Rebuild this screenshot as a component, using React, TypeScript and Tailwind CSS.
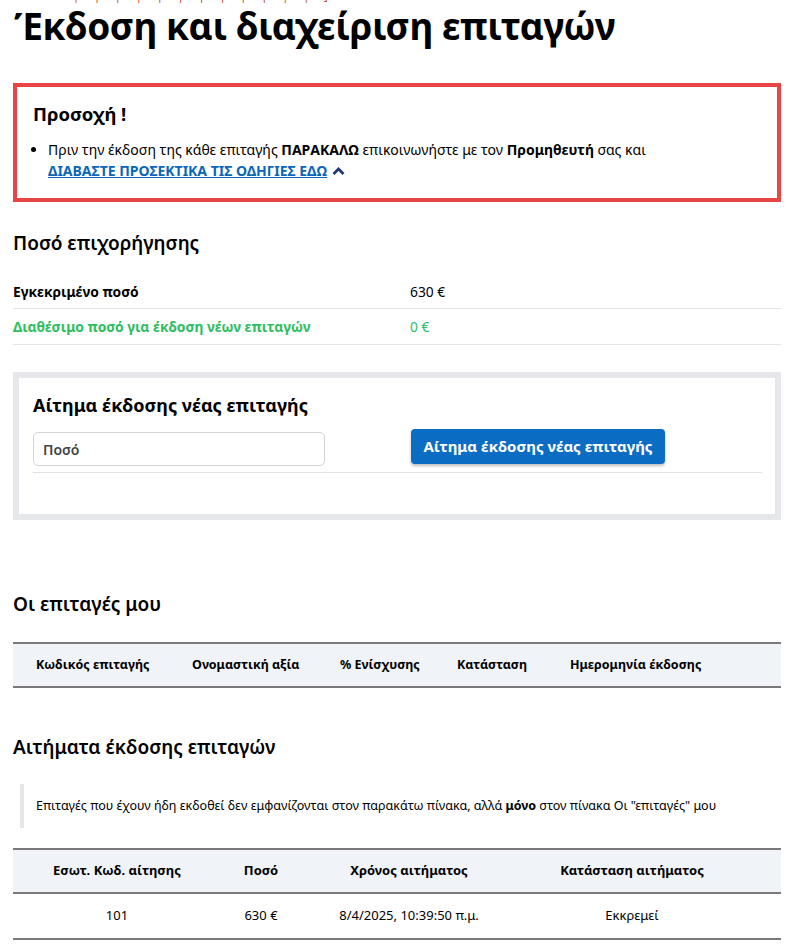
import React from "react";

export default function App() {
  const font = { fontFamily: '"Noto Sans", "Open Sans", sans-serif' };
  return (
    <div className="w-[792px] h-[952px] overflow-hidden bg-white text-black" style={font}>
      <div className="pl-[13px] pr-[11px]">
        <div className="h-[3px] overflow-hidden">
          <div className="-mt-[11px] ml-[60px] text-[11px] leading-[14px] text-[#c2410c] tracking-[6px] whitespace-nowrap">| | | | | | | | | | | | ]</div>
        </div>
        <h1 className="text-[37px] font-bold leading-[44px] mt-[1px] ml-[1px] tracking-[-0.45px]">Έκδοση και διαχείριση επιταγών</h1>

        <div className="mt-[35px] border-4 border-[#e84545] px-[16px] pt-[14px] h-[119px]">
          <div className="text-[18.5px] font-bold leading-[26px]">Προσοχή !</div>
          <ul className="mt-[12px] list-disc pl-[15px] text-[14px] leading-[21px]">
            <li>
              Πριν την έκδοση της κάθε επιταγής <b>ΠΑΡΑΚΑΛΩ</b> επικοινωνήστε με τον <b>Προμηθευτή</b> σας και
              <br />
              <span className="inline-flex items-center gap-[5px]">
                <a className="text-[#0a66b7] font-bold underline">ΔΙΑΒΑΣΤΕ ΠΡΟΣΕΚΤΙΚΑ ΤΙΣ ΟΔΗΓΙΕΣ ΕΔΩ</a>
                <svg width="13" height="10" viewBox="0 0 13 10" className="text-[#1e3a6e]">
                  <path d="M1.5 8 L6.5 3 L11.5 8" stroke="currentColor" strokeWidth="2.8" fill="none" />
                </svg>
              </span>
            </li>
          </ul>
        </div>

        <h2 className="mt-[27px] text-[19px] font-semibold leading-[28px]">Ποσό επιχορήγησης</h2>
        <div className="mt-[16px]">
          <div className="flex h-[36px] items-center pt-[3px] border-b border-[#e5e5e5] text-[13.8px]">
            <div className="w-[397px] font-bold">Εγκεκριμένο ποσό</div>
            <div>630 €</div>
          </div>
          <div className="flex h-[36px] items-center pt-[2px] border-b border-[#e5e5e5] text-[13.8px] text-[#2dbe5f]">
            <div className="w-[397px] font-bold">Διαθέσιμο ποσό για έκδοση νέων επιταγών</div>
            <div>0 €</div>
          </div>
        </div>

        <div className="mt-[27px] border-[6px] border-[#e5e7eb] pl-[14px] pr-[13px] pt-[14px] h-[148px]">
          <h3 className="text-[18px] font-bold leading-[26px]">Αίτημα έκδοσης νέας επιταγής</h3>
          <div className="mt-[11px] flex items-start pb-[6px] border-b border-[#e3e3e3]">
            <div className="mt-[3px] w-[292px] h-[34px] rounded-[5px] border border-[#d4d4d8] flex items-center px-[9px] text-[14px] font-semibold text-[#444]">
              Ποσό
            </div>
            <button className="ml-[86px] h-[35px] w-[254px] rounded-[4px] bg-[#0b6cc4] text-white text-[15px] font-bold shadow-[0_2px_3px_rgba(0,0,0,0.25)]">
              Αίτημα έκδοσης νέας επιταγής
            </button>
          </div>
        </div>

        <h2 className="mt-[70px] text-[19px] font-semibold leading-[28px]">Οι επιταγές μου</h2>
        <div className="mt-[24px] h-[46px] border-y-2 border-[#7a7a7a] bg-[#f0f4f8] flex items-center text-[12.5px] font-bold">
          <div className="pl-[23px] w-[179px]">Κωδικός επιταγής</div>
          <div className="w-[148px]">Ονομαστική αξία</div>
          <div className="w-[117px]">% Ενίσχυσης</div>
          <div className="w-[113px]">Κατάσταση</div>
          <div>Ημερομηνία έκδοσης</div>
        </div>

        <h2 className="mt-[45px] text-[19px] font-semibold leading-[28px]">Αιτήματα έκδοσης επιταγών</h2>
        <div className="mt-[23px] ml-[7px] border-l-4 border-[#e5e7eb] h-[44px] flex items-center pl-[12px] text-[12.5px]">
          <span>Επιταγές που έχουν ήδη εκδοθεί δεν εμφανίζονται στον παρακάτω πίνακα, αλλά <b>μόνο</b> στον πίνακα Οι "επιταγές" μου</span>
        </div>

        <div className="mt-[20px] text-[13px]">
          <div className="h-[46px] border-y-2 border-[#7a7a7a] bg-[#f0f4f8] flex items-center font-bold text-center">
            <div className="w-[208px]">Εσωτ. Κωδ. αίτησης</div>
            <div className="w-[80px]">Ποσό</div>
            <div className="w-[216px]">Χρόνος αιτήματος</div>
            <div className="w-[230px]">Κατάσταση αιτήματος</div>
          </div>
          <div className="h-[46px] border-b-2 border-[#7a7a7a] flex items-center text-center">
            <div className="w-[208px]">101</div>
            <div className="w-[80px]">630 €</div>
            <div className="w-[216px]">8/4/2025, 10:39:50 π.μ.</div>
            <div className="w-[230px]">Εκκρεμεί</div>
          </div>
        </div>
      </div>
    </div>
  );
}
